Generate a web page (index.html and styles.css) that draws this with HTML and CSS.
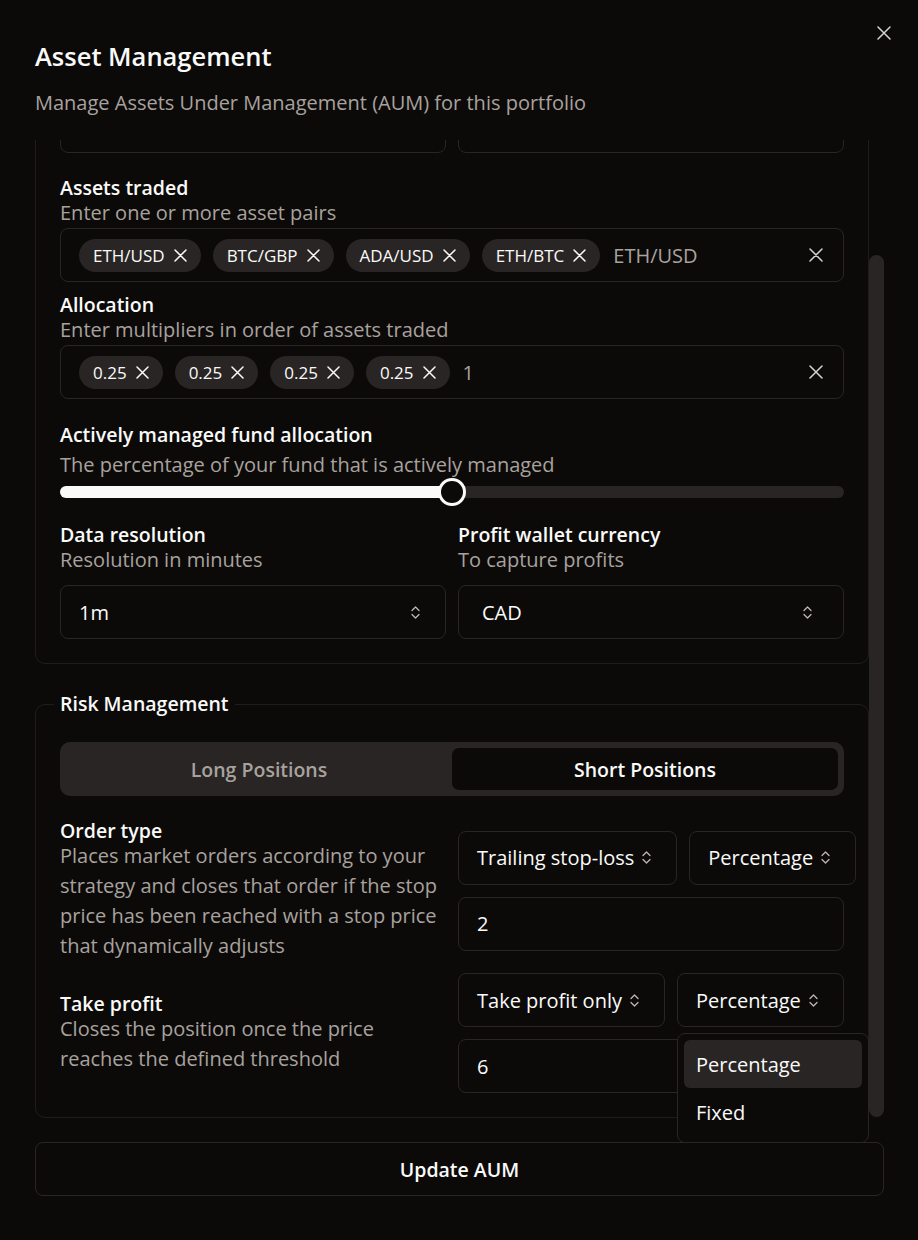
FILE: index.html
```html
<!DOCTYPE html>
<html lang="en">
<head>
<meta charset="utf-8">
<title>Asset Management</title>
<link rel="stylesheet" href="styles.css">
</head>
<body>
<div class="dialog">
  <button class="close" aria-label="Close">
    <svg width="14" height="14" viewBox="0 0 14 14"><path d="M1 1 13 13M13 1 1 13" fill="none" stroke="currentColor" stroke-width="1.5" stroke-linecap="round"/></svg>
  </button>

  <header class="dialog-header">
    <h2 class="title">Asset Management</h2>
    <p class="subtitle">Manage Assets Under Management (AUM) for this portfolio</p>
  </header>

  <div class="scroll-wrap">
    <div class="scroll">
      <fieldset class="group first">
        <div class="cols">
          <div class="field">
            <div class="input hidden-row"></div>
          </div>
          <div class="field">
            <div class="input hidden-row"></div>
          </div>
        </div>

        <div class="field mt24">
          <span class="label">Assets traded</span>
          <p class="desc">Enter one or more asset pairs</p>
          <div class="tagbox">
            <span class="chip">ETH/USD <svg class="x" width="13" height="13" viewBox="0 0 13 13"><path d="M1 1 12 12M12 1 1 12"/></svg></span>
            <span class="chip">BTC/GBP <svg class="x" width="13" height="13" viewBox="0 0 13 13"><path d="M1 1 12 12M12 1 1 12"/></svg></span>
            <span class="chip">ADA/USD <svg class="x" width="13" height="13" viewBox="0 0 13 13"><path d="M1 1 12 12M12 1 1 12"/></svg></span>
            <span class="chip">ETH/BTC <svg class="x" width="13" height="13" viewBox="0 0 13 13"><path d="M1 1 12 12M12 1 1 12"/></svg></span>
            <span class="placeholder">ETH/USD</span>
            <svg class="clear" width="14" height="14" viewBox="0 0 14 14"><path d="M1 1 13 13M13 1 1 13"/></svg>
          </div>
        </div>

        <div class="field mt12">
          <span class="label">Allocation</span>
          <p class="desc">Enter multipliers in order of assets traded</p>
          <div class="tagbox">
            <span class="chip">0.25 <svg class="x" width="13" height="13" viewBox="0 0 13 13"><path d="M1 1 12 12M12 1 1 12"/></svg></span>
            <span class="chip">0.25 <svg class="x" width="13" height="13" viewBox="0 0 13 13"><path d="M1 1 12 12M12 1 1 12"/></svg></span>
            <span class="chip">0.25 <svg class="x" width="13" height="13" viewBox="0 0 13 13"><path d="M1 1 12 12M12 1 1 12"/></svg></span>
            <span class="chip">0.25 <svg class="x" width="13" height="13" viewBox="0 0 13 13"><path d="M1 1 12 12M12 1 1 12"/></svg></span>
            <span class="placeholder">1</span>
            <svg class="clear" width="14" height="14" viewBox="0 0 14 14"><path d="M1 1 13 13M13 1 1 13"/></svg>
          </div>
        </div>

        <div class="field mt25">
          <span class="label">Actively managed fund allocation</span>
          <p class="desc slider-desc">The percentage of your fund that is actively managed</p>
          <div class="slider">
            <div class="track"><div class="range" style="width:50%"></div></div>
            <span class="knob" style="left:calc(50% - 14px)"></span>
          </div>
        </div>

        <div class="cols mt18">
          <div class="field">
            <span class="label">Data resolution</span>
            <p class="desc">Resolution in minutes</p>
            <div class="select gap10">
              <span>1m</span>
              <svg class="chev" width="9" height="15" viewBox="0 0 9 15"><path d="M1 5.5 4.5 2 8 5.5M1 9.5 4.5 13 8 9.5"/></svg>
            </div>
          </div>
          <div class="field">
            <span class="label">Profit wallet currency</span>
            <p class="desc">To capture profits</p>
            <div class="select gap10 wide-pad">
              <span>CAD</span>
              <svg class="chev" width="9" height="15" viewBox="0 0 9 15"><path d="M1 5.5 4.5 2 8 5.5M1 9.5 4.5 13 8 9.5"/></svg>
            </div>
          </div>
        </div>
      </fieldset>

      <fieldset class="group risk">
        <legend>Risk Management</legend>
        <div class="tabs">
          <span class="tab">Long Positions</span>
          <span class="tab active">Short Positions</span>
        </div>

        <div class="rule-row mt24">
          <div class="rule-text">
            <span class="label">Order type</span>
            <p class="desc">Places market orders according to your strategy and closes that order if the stop price has been reached with a stop price that dynamically adjusts</p>
          </div>
          <div class="controls">
            <div class="sel-row">
              <div class="select fit">
                <span>Trailing stop-loss</span>
                <svg class="chev" width="9" height="15" viewBox="0 0 9 15"><path d="M1 5.5 4.5 2 8 5.5M1 9.5 4.5 13 8 9.5"/></svg>
              </div>
              <div class="select fill">
                <span>Percentage</span>
                <svg class="chev" width="9" height="15" viewBox="0 0 9 15"><path d="M1 5.5 4.5 2 8 5.5M1 9.5 4.5 13 8 9.5"/></svg>
              </div>
            </div>
            <div class="input">2</div>
          </div>
        </div>

        <div class="rule-row mt12">
          <div class="rule-text">
            <span class="label">Take profit</span>
            <p class="desc">Closes the position once the price reaches the defined threshold</p>
          </div>
          <div class="controls">
            <div class="sel-row">
              <div class="select fit">
                <span>Take profit only</span>
                <svg class="chev" width="9" height="15" viewBox="0 0 9 15"><path d="M1 5.5 4.5 2 8 5.5M1 9.5 4.5 13 8 9.5"/></svg>
              </div>
              <div class="select fill">
                <span>Percentage</span>
                <svg class="chev" width="9" height="15" viewBox="0 0 9 15"><path d="M1 5.5 4.5 2 8 5.5M1 9.5 4.5 13 8 9.5"/></svg>
              </div>
            </div>
            <div class="input">6</div>
          </div>
        </div>
      </fieldset>
    </div>
    <span class="thumb"></span>
  </div>

  <button class="submit">Update AUM</button>

  <div class="popover">
    <div class="option selected">Percentage</div>
    <div class="option">Fixed</div>
  </div>
</div>
</body>
</html>
```

FILE: styles.css
```css
* {
  box-sizing: border-box;
  margin: 0;
  padding: 0;
}

html,
body {
  background: #0c0a09;
}

body {
  width: 918px;
  height: 1240px;
  overflow: hidden;
  font-family: "Open Sans", "Noto Sans", sans-serif;
  color: #fafaf9;
}

.dialog {
  position: relative;
  height: 1240px;
  padding: 40px 34px 0 35px;
}

.close {
  position: absolute;
  top: 26px;
  left: 877px;
  width: 14px;
  height: 14px;
  display: flex;
  background: none;
  border: 0;
  color: #d6d3d1;
}

.title {
  font-size: 25.5px;
  font-weight: 600;
  line-height: 32px;
}

.subtitle {
  margin-top: 16px;
  font-size: 20px;
  line-height: 30px;
  color: #a8a29e;
}

.scroll-wrap {
  position: relative;
  margin-top: 22px;
  height: 978px;
}

.scroll {
  height: 978px;
  overflow: hidden;
  display: flex;
  flex-direction: column;
  justify-content: flex-end;
  padding-right: 15px;
}

.thumb {
  position: absolute;
  right: 0;
  top: 115px;
  width: 15px;
  height: 862px;
  border-radius: 8px;
  background: #292524;
}

.group {
  flex-shrink: 0;
  min-width: 0;
  border: 1px solid #1f1c1a;
  border-radius: 10px;
  padding: 24px;
  display: flex;
  flex-direction: column;
}

.group.first {
  padding-top: 51px;
}

.group legend {
  margin-left: -6px;
  padding: 0 6px;
  font-size: 19.5px;
  font-weight: 600;
  line-height: 28px;
}

.risk {
  margin-top: 26px;
}

.mt12 { margin-top: 12px; }
.mt18 { margin-top: 18px; }
.mt24 { margin-top: 24px; }
.mt25 { margin-top: 25px; }

.cols {
  display: grid;
  grid-template-columns: minmax(0, 1fr) minmax(0, 1fr);
  column-gap: 12px;
}

.field {
  display: flex;
  flex-direction: column;
  min-width: 0;
}

.label {
  display: block;
  font-size: 19.5px;
  font-weight: 600;
  line-height: 21px;
}

.desc {
  font-size: 20px;
  line-height: 30px;
  color: #a8a29e;
}

.slider-desc {
  margin-top: 7px;
  line-height: 26px;
  white-space: nowrap;
}

.hidden-row { margin-top: 39px; }
.gap10 { margin-top: 10px; }

.input {
  height: 54px;
  border: 1px solid #292524;
  border-radius: 8px;
  padding: 0 18px;
  display: flex;
  align-items: center;
  font-size: 20px;
}

.tagbox {
  height: 54px;
  border: 1px solid #292524;
  border-radius: 8px;
  padding: 0 20px 0 18px;
  display: flex;
  align-items: center;
  gap: 12px;
}

.chip {
  height: 33px;
  padding: 0 14px;
  border-radius: 17px;
  background: #292524;
  display: flex;
  align-items: center;
  gap: 9px;
  font-size: 17px;
  white-space: nowrap;
}

.chip .x path,
.clear path {
  fill: none;
  stroke: currentColor;
  stroke-width: 1.5;
  stroke-linecap: round;
}

.chip .x {
  color: #fafaf9;
}

.placeholder {
  margin-left: 1px;
  font-size: 20px;
  color: #a8a29e;
}

.clear {
  margin-left: auto;
  color: #d6d3d1;
}

.slider {
  position: relative;
  height: 28px;
  display: flex;
  align-items: center;
}

.track {
  width: 100%;
  height: 12px;
  border-radius: 6px;
  background: #292524;
  overflow: hidden;
}

.range {
  height: 100%;
  background: #fafaf9;
}

.knob {
  position: absolute;
  top: 0;
  width: 28px;
  height: 28px;
  border-radius: 50%;
  border: 3px solid #fafaf9;
  background: #0c0a09;
}

.select {
  height: 54px;
  border: 1px solid #292524;
  border-radius: 8px;
  padding: 0 25px 0 18px;
  display: flex;
  align-items: center;
  justify-content: space-between;
  gap: 8px;
  font-size: 20px;
  white-space: nowrap;
}

.select.wide-pad {
  padding: 0 31px 0 23px;
}

.chev {
  flex: none;
  color: #bcb7b3;
}

.chev path {
  fill: none;
  stroke: currentColor;
  stroke-width: 1.3;
  stroke-linecap: round;
  stroke-linejoin: round;
}

.tabs {
  height: 54px;
  padding: 6px;
  border-radius: 10px;
  background: #292524;
  display: flex;
}

.tab {
  flex: 1;
  display: flex;
  align-items: center;
  justify-content: center;
  border-radius: 7px;
  font-size: 19.5px;
  font-weight: 600;
  color: #a8a29e;
}

.tab.active {
  background: #0c0a09;
  color: #fafaf9;
}

.rule-row {
  display: grid;
  grid-template-columns: minmax(0, 1fr) minmax(0, 1fr);
  column-gap: 12px;
  align-items: center;
}

.controls {
  display: flex;
  flex-direction: column;
  gap: 12px;
  min-width: 0;
}

.sel-row {
  display: flex;
  gap: 12px;
}

.select.fit {
  flex: none;
}

.select.fill {
  flex: 1 0 auto;
}

.submit {
  display: flex;
  align-items: center;
  justify-content: center;
  width: 100%;
  height: 54px;
  margin-top: 24px;
  border: 1px solid #292524;
  border-radius: 8px;
  background: #0c0a09;
  color: #fafaf9;
  font-family: "Open Sans", "Noto Sans", sans-serif;
  font-size: 19.5px;
  font-weight: 600;
}

.popover {
  position: absolute;
  left: 677px;
  top: 1033px;
  width: 192px;
  padding: 6px;
  border: 1px solid #292524;
  border-radius: 8px;
  background: #0c0a09;
  z-index: 2;
}

.option {
  height: 48px;
  padding: 0 12px;
  display: flex;
  align-items: center;
  border-radius: 6px;
  font-size: 20px;
}

.option.selected {
  background: #292524;
}
```
